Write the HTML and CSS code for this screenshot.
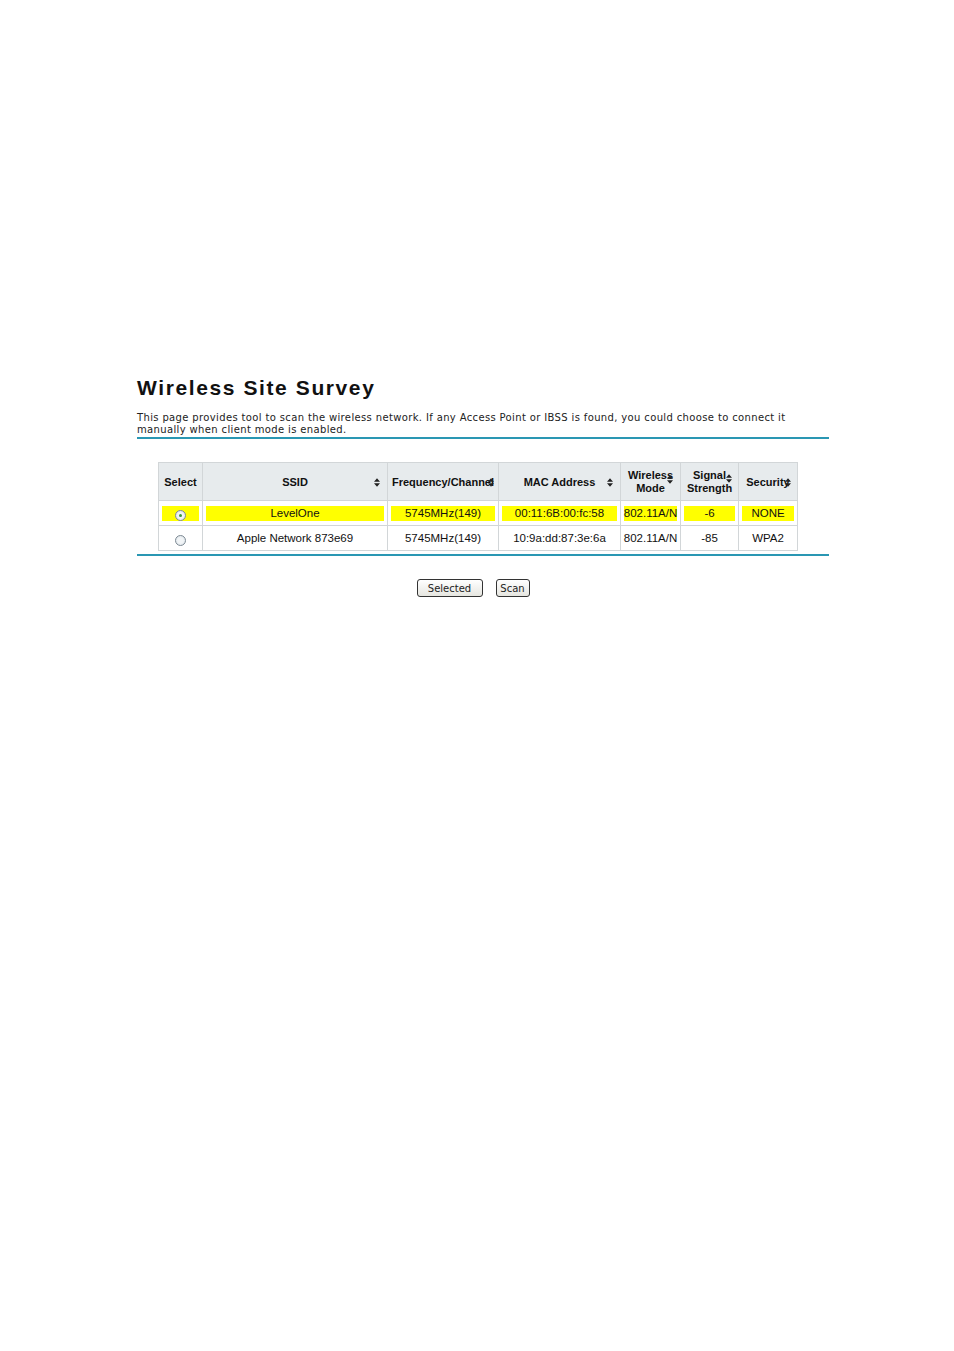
FILE: index.html
```html
<!DOCTYPE html>
<html>
<head>
<meta charset="utf-8">
<link rel="stylesheet" href="styles.css">
</head>
<body>
<div class="page">
  <h1 class="title">Wireless Site Survey</h1>
  <p class="desc">This page provides tool to scan the wireless network. If any Access Point or IBSS is found, you could choose to connect it<br>manually when client mode is enabled.</p>
  <div class="rule"></div>
  <div class="tablewrap">
    <table class="survey">
      <colgroup>
        <col class="c1"><col class="c2"><col class="c3"><col class="c4"><col class="c5"><col class="c6"><col class="c7">
      </colgroup>
      <thead>
        <tr>
          <th><div class="hd"><span class="lbl">Select</span></div></th>
          <th><div class="hd"><span class="lbl">SSID</span><svg class="sort s-ssid" viewBox="0 0 7 10"><path d="M3.5 0L7 4H0z M3.5 10L7 6H0z"/></svg></div></th>
          <th><div class="hd"><span class="lbl">Frequency/Channel</span><svg class="sort s-freq" viewBox="0 0 7 10"><path d="M3.5 0L7 4H0z M3.5 10L7 6H0z"/></svg></div></th>
          <th><div class="hd"><span class="lbl">MAC Address</span><svg class="sort s-mac" viewBox="0 0 7 10"><path d="M3.5 0L7 4H0z M3.5 10L7 6H0z"/></svg></div></th>
          <th><div class="hd"><span class="lbl">Wireless<br>Mode</span><svg class="sort s-mode" viewBox="0 0 7 10"><path d="M3.5 0L7 4H0z M3.5 10L7 6H0z"/></svg></div></th>
          <th><div class="hd"><span class="lbl">Signal<br>Strength</span><svg class="sort s-sig" viewBox="0 0 7 10"><path d="M3.5 0L7 4H0z M3.5 10L7 6H0z"/></svg></div></th>
          <th><div class="hd"><span class="lbl">Security</span><svg class="sort s-sec" viewBox="0 0 7 10"><path d="M3.5 0L7 4H0z M3.5 10L7 6H0z"/></svg></div></th>
        </tr>
      </thead>
      <tbody>
        <tr class="hl">
          <td><div class="cell"><span class="radio on"></span></div></td>
          <td><div class="cell">LevelOne</div></td>
          <td><div class="cell">5745MHz(149)</div></td>
          <td><div class="cell">00:11:6B:00:fc:58</div></td>
          <td><div class="cell">802.11A/N</div></td>
          <td><div class="cell">-6</div></td>
          <td><div class="cell">NONE</div></td>
        </tr>
        <tr>
          <td><div class="cell"><span class="radio"></span></div></td>
          <td><div class="cell">Apple Network 873e69</div></td>
          <td><div class="cell">5745MHz(149)</div></td>
          <td><div class="cell">10:9a:dd:87:3e:6a</div></td>
          <td><div class="cell">802.11A/N</div></td>
          <td><div class="cell">-85</div></td>
          <td><div class="cell">WPA2</div></td>
        </tr>
      </tbody>
    </table>
  </div>
  <div class="rule bottom"></div>
  <div class="buttons">
    <button class="btn sel">Selected</button>
    <button class="btn scan">Scan</button>
  </div>
</div>
</body>
</html>
```

FILE: styles.css
```css
html, body {
  margin: 0;
  padding: 0;
  background: #ffffff;
}
.page {
  width: 692px;
  margin-left: 137px;
  padding-top: 374px;
  font-family: "Liberation Sans", Arial, sans-serif;
  color: #000;
}
.title {
  margin: 0;
  font-size: 21px;
  line-height: 28px;
  font-weight: bold;
  letter-spacing: 1.6px;
  color: #111;
}
.desc {
  margin: 10px 0 0 0;
  font-family: "DejaVu Sans", Verdana, sans-serif;
  font-size: 10px;
  line-height: 12px;
  letter-spacing: 0.36px;
  color: #222;
}
.rule {
  height: 2px;
  background: #2a97b3;
  margin-top: 1px;
}
.rule.bottom {
  margin-top: 3px;
}
.tablewrap {
  padding: 23px 0 0 21px;
}
.survey {
  border-collapse: collapse;
  width: 639px;
  table-layout: fixed;
  font-size: 11px;
}
.c1 { width: 44px; }
.c2 { width: 185px; }
.c3 { width: 111px; }
.c4 { width: 122px; }
.c5 { width: 60px; }
.c6 { width: 58px; }
.c7 { width: 59px; }
.survey th, .survey td {
  border: 1px solid #d2d6d8;
  padding: 0;
}
.survey th {
  background: #e7ebed;
  height: 37px;
  font-weight: bold;
  font-size: 11px;
  line-height: 13px;
  color: #111;
}
.hd {
  display: flex;
  align-items: center;
  justify-content: center;
  position: relative;
  height: 37px;
  padding-top: 1px;
  box-sizing: border-box;
}
.lbl {
  text-align: center;
  white-space: nowrap;
}
.sort {
  position: absolute;
  width: 6px;
  height: 9px;
  fill: #222;
  top: 15px;
}
.s-ssid { right: 7px; }
.s-freq { right: 4px; }
.s-mac { right: 7px; }
.s-mode { right: 7px; top: 12px; }
.s-sig { right: 6px; top: 11px; }
.s-sec { right: 6px; }
.survey td {
  height: 24px;
  text-align: center;
  font-size: 11.5px;
  color: #111;
}
.cell {
  margin: 3px 3px;
  height: 15px;
  line-height: 15px;
  display: flex;
  align-items: center;
  justify-content: center;
  white-space: nowrap;
}
.hl .cell {
  background: #ffff00;
}
.radio {
  display: inline-block;
  width: 9px;
  height: 9px;
  border: 1px solid #7e8a94;
  border-radius: 50%;
  background: radial-gradient(circle, #f2f5f7 40%, #d5dde3 100%);
  position: relative;
  margin-top: 4px;
}
.radio.on::after {
  content: "";
  position: absolute;
  left: 3px;
  top: 3px;
  width: 3px;
  height: 3px;
  border-radius: 50%;
  background: #3a9a3a;
}
.buttons {
  display: flex;
  justify-content: center;
  gap: 13px;
  margin-top: 23px;
  padding-right: 20px;
}
.btn {
  font-family: "DejaVu Sans", Verdana, sans-serif;
  font-size: 10px;
  height: 18px;
  padding: 0 3px;
  border: 1px solid #333;
  border-radius: 3px;
  background: linear-gradient(#ffffff, #e6e6e0);
  color: #222;
}
.btn.sel {
  width: 66px;
}
.btn.scan {
  width: 34px;
}
```
